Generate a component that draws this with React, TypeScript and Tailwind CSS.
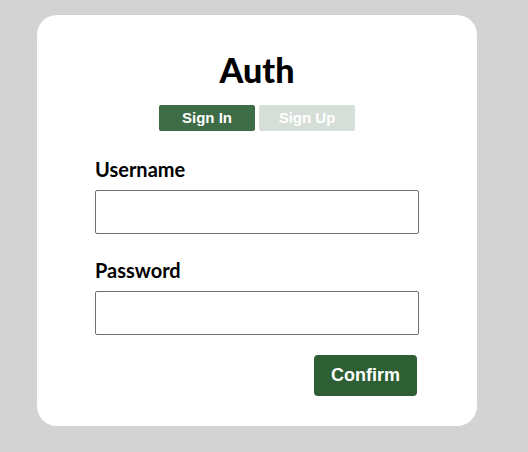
export default function App() {
  return (
    <div className="min-h-[452px] w-full bg-[#d3d3d3] pt-[15px] pl-[37px]">
      <div className="w-[440px] h-[411px] bg-white rounded-[20px] flex flex-col items-center pt-[36px]">
        <h1 className="text-[34px] leading-[38px] font-black text-black font-['Lato',sans-serif]">Auth</h1>

        <div className="flex gap-[4px] mt-[16px] font-['Liberation_Sans',Arial,sans-serif]">
          <button className="w-[96px] h-[26px] rounded-[2px] bg-[#3e6c46] text-white text-[15px] font-bold">
            Sign In
          </button>
          <button className="w-[96px] h-[26px] rounded-[2px] bg-[#d6ded8] text-white text-[15px] font-bold">
            Sign Up
          </button>
        </div>

        <div className="w-[324px] mt-[26px] flex flex-col font-['Lato',sans-serif]">
          <label className="text-[20px] leading-[24px] font-bold text-black">Username</label>
          <input className="mt-[9px] h-[44px] border border-[#707070] rounded-[2px] outline-none" />

          <label className="mt-[24px] text-[20px] leading-[24px] font-bold text-black">Password</label>
          <input type="password" className="mt-[9px] h-[44px] border border-[#707070] rounded-[2px] outline-none" />

          <div className="flex justify-end mt-[20px] mr-[2px]">
            <button className="w-[103px] h-[41px] rounded-[4px] bg-[#2d5e34] text-white text-[18px] font-bold font-['Liberation_Sans',Arial,sans-serif]">
              Confirm
            </button>
          </div>
        </div>
      </div>
    </div>
  );
}
